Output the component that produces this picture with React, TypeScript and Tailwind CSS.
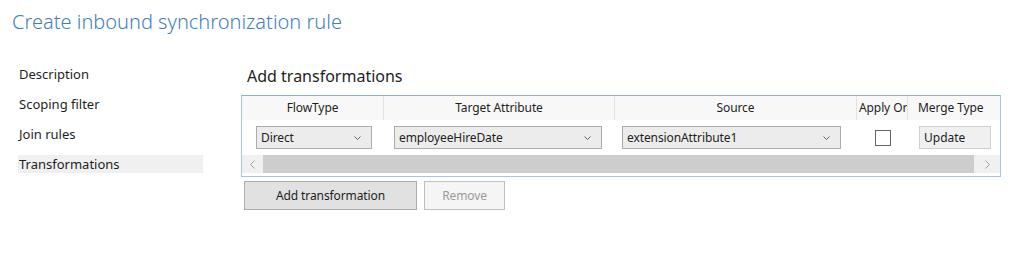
import React from "react";

const font = { fontFamily: '"Noto Sans", "Open Sans", sans-serif' };

function Chevron() {
  return (
    <svg width="7" height="4" viewBox="0 0 7 4" className="shrink-0">
      <path d="M0.5 0.5 L3.5 3.5 L6.5 0.5" fill="none" stroke="#606060" strokeWidth="1" />
    </svg>
  );
}

function Select({ text, w }: { text: string; w: string }) {
  return (
    <div className={`${w} h-[23px] flex items-center justify-between border border-[#acacac] bg-[#ececec] pl-[4px] pr-[10px] text-[12px] tracking-[-0.1px] text-[#1e1e1e]`}>
      <span>{text}</span>
      <Chevron />
    </div>
  );
}

export default function App() {
  return (
    <div className="w-[1024px] h-[274px] bg-white overflow-hidden relative" style={font}>
      <div className="pl-[12px] pt-[8px] text-[20px] leading-[28px] text-[#3f7fbf] font-light">
        Create inbound synchronization rule
      </div>
      <div className="flex mt-[30px]">
        <div className="w-[241px] pl-[18px] pr-[38px] flex flex-col text-[13px] text-[#1e1e1e] -mt-[1px]">
          <div className="h-[30px] leading-[18px] pl-[1px]">Description</div>
          <div className="h-[30px] leading-[18px] pl-[1px]">Scoping filter</div>
          <div className="h-[30px] leading-[18px] pl-[1px]">Join rules</div>
          <div className="h-[18px] leading-[18px] pl-[1px] bg-[#f0f0f0]">Transformations</div>
        </div>
        <div className="flex-1 -mt-[1px]">
          <div className="pl-[6px] text-[16px] leading-[22px] text-[#1e1e1e]">Add transformations</div>
          <div className="mt-[8px] w-[760px] h-[82px] border border-[#a9c4e2] border-t-[#8eaed4] flex flex-col overflow-hidden">
            <div className="flex h-[24px] bg-[#f8f8f8] text-[12px] tracking-[-0.1px] text-[#1e1e1e] shrink-0">
              <div className="w-[142px] border-r border-[#e3e3e3] flex items-center justify-center">FlowType</div>
              <div className="w-[231px] border-r border-[#e3e3e3] flex items-center justify-center">Target Attribute</div>
              <div className="w-[242px] border-r border-[#e3e3e3] flex items-center justify-center">Source</div>
              <div className="w-[51px] border-r border-[#e3e3e3] flex items-center overflow-hidden whitespace-nowrap pl-[2px]">Apply Or</div>
              <div className="w-[92px] flex items-center pl-[10px] whitespace-nowrap">Merge Type</div>
            </div>
            <div className="flex h-[35px] items-center shrink-0">
              <div className="w-[142px] pl-[14px]"><Select text="Direct" w="w-[116px]" /></div>
              <div className="w-[231px] pl-[10px]"><Select text="employeeHireDate" w="w-[208px]" /></div>
              <div className="w-[242px] pl-[7px]"><Select text="extensionAttribute1" w="w-[219px]" /></div>
              <div className="w-[51px] flex justify-center">
                <div className="w-[16px] h-[16px] border border-[#666666] bg-white" />
              </div>
              <div className="w-[92px] pl-[11px]">
                <div className="w-[72px] h-[23px] flex items-center border border-[#d0d0d0] bg-[#f0f0f0] pl-[4px] text-[12px] text-[#1e1e1e]">Update</div>
              </div>
            </div>
            <div className="flex h-[18px] shrink-0">
              <div className="w-[21px] bg-[#f0f0f0] flex items-center justify-center">
                <svg width="5" height="9" viewBox="0 0 5 9"><path d="M4.5 0.5 L0.5 4.5 L4.5 8.5" fill="none" stroke="#a0a0a0" strokeWidth="1" /></svg>
              </div>
              <div className="w-[711px] bg-[#cdcdcd]" />
              <div className="flex-1 bg-[#f0f0f0] flex items-center justify-center">
                <svg width="5" height="9" viewBox="0 0 5 9"><path d="M0.5 0.5 L4.5 4.5 L0.5 8.5" fill="none" stroke="#a0a0a0" strokeWidth="1" /></svg>
              </div>
            </div>
          </div>
          <div className="flex gap-[7px] mt-[4px] ml-[3px]">
            <div className="w-[173px] h-[29px] flex items-center justify-center border border-[#adadad] bg-[#e1e1e1] text-[12px] tracking-[-0.1px] text-[#1e1e1e]">Add transformation</div>
            <div className="w-[81px] h-[29px] flex items-center justify-center border border-[#bfbfbf] bg-[#f5f5f5] text-[12px] tracking-[-0.1px] text-[#9a9a9a]">Remove</div>
          </div>
        </div>
      </div>
    </div>
  );
}
